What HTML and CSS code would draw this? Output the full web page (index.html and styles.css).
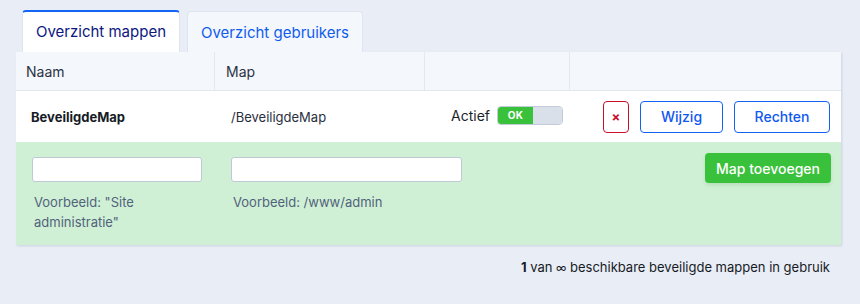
FILE: index.html
```html
<!DOCTYPE html>
<html lang="nl">
<head>
<meta charset="utf-8">
<title>Beveiligde mappen</title>
<link rel="stylesheet" href="styles.css">
</head>
<body>
<div class="wrap">
  <div class="tabs">
    <div class="tab active">Overzicht mappen</div>
    <div class="tab">Overzicht gebruikers</div>
  </div>
  <div class="panel">
    <div class="row head">
      <div class="cell">Naam</div>
      <div class="cell">Map</div>
      <div class="cell"></div>
      <div class="cell"></div>
    </div>
    <div class="row data">
      <div class="cell name">BeveiligdeMap</div>
      <div class="cell path">/BeveiligdeMap</div>
      <div class="cell status">
        <span class="label">Actief</span>
        <span class="toggle"><span class="on">OK</span><span class="off"></span></span>
      </div>
      <div class="cell actions">
        <button class="btn del">×</button>
        <button class="btn out w1">Wijzig</button>
        <button class="btn out w2">Rechten</button>
      </div>
    </div>
    <div class="row add">
      <div class="cell f1">
        <input class="inp i1" type="text">
        <div class="hint">Voorbeeld: "Site<br>administratie"</div>
      </div>
      <div class="cell f2">
        <input class="inp i2" type="text">
        <div class="hint">Voorbeeld: /www/admin</div>
      </div>
      <div class="cell addbtn">
        <button class="btn green">Map toevoegen</button>
      </div>
    </div>
  </div>
  <div class="footer"><b>1</b> van <span class="inf">∞</span> beschikbare beveiligde mappen in gebruik</div>
</div>
</body>
</html>
```
FILE: styles.css
```css
html, body {
  margin: 0;
  padding: 0;
  background: #e9edf5;
  font-family: Inter, Roboto, "Liberation Sans", Arial, sans-serif;
  color: #1e2433;
}
.wrap {
  width: 825px;
  padding: 10px 0 0 16px;
}
.tabs {
  display: flex;
  gap: 7px;
  padding-left: 6px;
  align-items: flex-end;
  height: 42px;
}
.tab {
  box-sizing: border-box;
  height: 41px;
  padding: 0;
  white-space: nowrap;
  display: flex;
  align-items: center;
  font-size: 15px;
  color: #0f5cf0;
  background: #f4f7fb;
  border: 1px solid #dfe5ee;
  border-bottom: none;
  border-radius: 4px 4px 0 0;
  width: 176px;
  justify-content: center;
}
.tab.active {
  height: 42px;
  width: 158px;
  background: #fff;
  color: #0c1780;
  border-top: 2px solid #1464f6;
  padding-bottom: 2px;
}
.panel {
  background: #fff;
  box-shadow: 1px 1px 2px rgba(40, 60, 100, 0.15);
}
.row {
  display: grid;
  grid-template-columns: 199px 210px 145px 271px;
}
.head {
  height: 39px;
  background: #f4f7fb;
  border-bottom: 1px solid #e2e7ef;
  box-sizing: border-box;
  font-size: 14px;
  color: #2c3344;
}
.head .cell {
  display: flex;
  align-items: center;
  padding-left: 10px;
  border-right: 1px solid #e4e9f0;
}
.head .cell:nth-child(2) { padding-left: 11px; }
.head .cell:last-child { border-right: none; }
.data {
  height: 51px;
  font-size: 13px;
}
.data .cell {
  display: flex;
  align-items: center;
}
.name {
  font-weight: 700;
  padding-left: 15px;
  color: #161b26;
}
.path {
  padding-left: 16px;
  color: #2a3040;
}
.status {
  justify-content: flex-end;
  padding-right: 7px;
  gap: 7px;
  margin-top: -2px;
}
.label {
  font-size: 14px;
  color: #1a1f2b;
}
.toggle {
  display: flex;
  box-sizing: border-box;
  width: 66px;
  height: 19px;
  border: 1px solid #c3cbd8;
  border-radius: 4px;
  overflow: hidden;
}
.toggle .on {
  width: 35px;
  background: #3ac13b;
  color: #fff;
  font-size: 10px;
  font-weight: 700;
  display: flex;
  align-items: center;
  justify-content: center;
  letter-spacing: 0.3px;
  padding-bottom: 2px;
  box-sizing: border-box;
}
.toggle .off {
  flex: 1;
  background: #d9e0ea;
}
.actions {
  justify-content: flex-end;
  padding-right: 11px;
  gap: 11px;
}
.btn {
  font-family: Inter, Roboto, "Liberation Sans", Arial, sans-serif;
  box-sizing: border-box;
  height: 32px;
  border-radius: 4px;
  font-size: 14px;
  cursor: pointer;
  padding: 0;
}
.del {
  width: 26px;
  background: #fff;
  border: 1px solid #c8102e;
  color: #c8102e;
  font-size: 13px;
  font-weight: 700;
}
.out {
  background: #fff;
  border: 1px solid #1462f4;
  color: #0f58f0;
  font-weight: 500;
}
.w1 { width: 83px; }
.w2 { width: 96px; }
.add {
  background: #cff0d4;
  height: 103px;
  grid-template-columns: 199px 245px 381px;
}
.add .cell {
  padding: 15px 0 0 16px;
}
.inp {
  display: block;
  box-sizing: border-box;
  height: 25px;
  width: 170px;
  border: 1px solid #bfc9d6;
  border-radius: 3px;
  background: #fff;
  margin: 0;
}
.i2 { width: 231px; }
.hint {
  margin-top: 10px;
  padding-left: 2px;
  font-size: 13px;
  line-height: 20px;
  color: #52627c;
}
.addbtn {
  display: flex;
  justify-content: flex-end;
  padding: 11px 10px 0 0 !important;
}
.green {
  width: 126px;
  height: 30px;
  background: #3ac13b;
  border: none;
  color: #fff;
  font-size: 14px;
  font-weight: 500;
  box-shadow: 0 2px 4px rgba(0, 80, 0, 0.12);
}
.footer {
  text-align: right;
  padding: 14px 11px 0 0;
  font-size: 13px;
  color: #161b26;
}
.footer b { font-weight: 700; }
.inf { font-size: 11px; }
```
